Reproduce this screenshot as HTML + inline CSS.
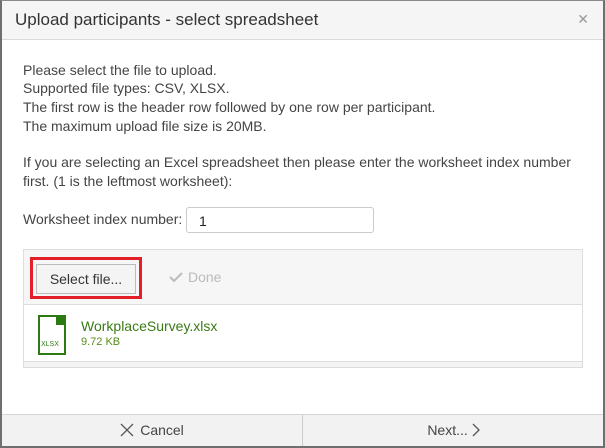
<!DOCTYPE html>
<html><head><style>
*{box-sizing:border-box;margin:0;padding:0}
body{width:605px;height:448px;overflow:hidden;background:#fff;font-family:"Liberation Sans",sans-serif;position:relative}
.frame{position:absolute;left:0;top:0;width:605px;height:448px;border:2px solid #6f6f6f;border-top:1px solid #8a8a8a}
.title{position:absolute;left:2px;top:1px;width:601px;height:39px;background:#f5f5f5;border-bottom:1px solid #d9d9d9}
.title span{position:absolute;left:13px;top:9px;font-size:17px;color:#333}
.close{position:absolute;right:14px;top:10px;font-size:14px;color:#999}
.t{position:absolute;left:23px;font-size:14px;color:#444;line-height:16px}
.input{position:absolute;left:186px;top:207px;width:188px;height:26px;border:1px solid #ccc;border-radius:3px;font-size:14px;padding:5px 0 0 12px;color:#222}
.panel{position:absolute;left:23px;top:249px;width:560px;height:119px;border:1px solid #ddd;background:#f3f3f3}
.tool{position:absolute;left:0;top:0;width:558px;height:55px;background:#f6f6f6;border-bottom:1px solid #ddd}
.red{position:absolute;left:6px;top:7px;width:112px;height:42px;border:3px solid #e3202a}
.btn{position:absolute;left:3px;top:4px;width:100px;height:30px;border:1px solid #bbb;background:#f4f4f4;font-size:14px;color:#333;text-align:center;line-height:28px}
.done{position:absolute;left:145px;top:19px;font-size:14px;color:#bbb}
.file{position:absolute;left:0;top:55px;width:558px;height:57px;background:#fff;border-bottom:1px solid #ddd}
.icon{position:absolute;left:14px;top:10px;width:28px;height:40px;border:2px solid #2d7a14;background:#fff}
.icon:after{content:"";position:absolute;right:-2px;top:-2px;width:10px;height:10px;background:#2d7a14}
.icon span{position:absolute;left:1px;top:24px;font-size:7px;color:#2d7a14}
.fn{position:absolute;left:57px;top:13px;font-size:14px;color:#3a7a14}
.fs{position:absolute;left:57px;top:31px;font-size:11px;color:#5a8a1a}
.foot{position:absolute;left:2px;top:414px;width:601px;height:32px;background:#f2f2f2;border-top:1px solid #d5d5d5}
.foot div{position:absolute;top:0;height:31px;line-height:31px;font-size:14px;color:#444;text-align:center}
</style></head><body>
<div class="title"><span>Upload participants - select spreadsheet</span><div class="close">✕</div></div>
<div class="t" style="top:62px">Please select the file to upload.</div>
<div class="t" style="top:80px">Supported file types: CSV, XLSX.</div>
<div class="t" style="top:99px">The first row is the header row followed by one row per participant.</div>
<div class="t" style="top:118px">The maximum upload file size is 20MB.</div>
<div class="t" style="top:154px">If you are selecting an Excel spreadsheet then please enter the worksheet index number</div>
<div class="t" style="top:173px">first. (1 is the leftmost worksheet):</div>
<div class="t" style="top:211px">Worksheet index number:</div>
<div class="input">1</div>
<div class="panel">
<div class="tool"><div class="red"><div class="btn">Select file...</div></div>
<div class="done"><svg width="14" height="12" viewBox="0 0 14 12" style="vertical-align:-1px;margin-right:5px"><path d="M1 6 L5 10 L13 2" stroke="#bbb" stroke-width="2" fill="none"/></svg>Done</div></div>
<div class="file"><div class="icon"><span>XLSX</span></div><div class="fn">WorkplaceSurvey.xlsx</div><div class="fs">9.72 KB</div></div>
</div>
<div class="foot">
<div style="left:0;width:301px;border-right:1px solid #ccc"><svg width="14" height="14" viewBox="0 0 14 14" style="vertical-align:-2px;margin-right:6px"><path d="M1 1L13 13M13 1L1 13" stroke="#555" stroke-width="1.3"/></svg>Cancel</div>
<div style="left:302px;width:299px">Next... <svg width="8" height="14" viewBox="0 0 8 14" style="vertical-align:-2px"><path d="M1 1L7 7L1 13" stroke="#555" stroke-width="1.3" fill="none"/></svg></div>
</div>
<div class="frame"></div>
</body></html>
